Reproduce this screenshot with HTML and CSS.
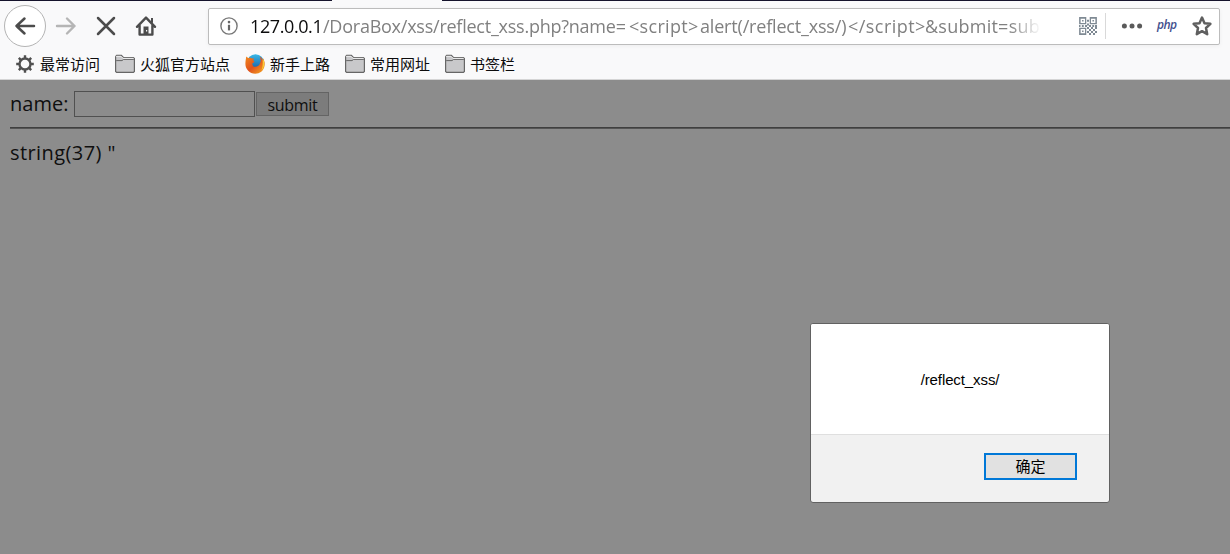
FILE: index.html
```html
<!DOCTYPE html>
<html lang="zh-CN">
<head>
<meta charset="utf-8">
<title>reflect_xss</title>
<link rel="stylesheet" href="styles.css">
</head>
<body>
<svg width="0" height="0" class="defs">
  <symbol id="folder" viewBox="0 0 20 20">
    <path d="M.6 17.4V2.6L1.6 1.4H6.4L8.4 3.5H18.4L19.4 4.5V17.4L18.4 18.4H1.6Z" fill="#c8c8ca" stroke="#666" stroke-width="1.2"/>
    <path d="M1.2 6.6H7L8.6 5.4H18.8" fill="none" stroke="#666"/>
    <path d="M1.4 3V2.3H6L8 4.4H18.6" fill="none" stroke="#eee"/>
  </symbol>
  <symbol id="finder" viewBox="0 0 7 7">
    <path d="M.8.8H6.2V6.2H.8Z" fill="none" stroke="#7f8a94" stroke-width="1.4"/>
    <path d="M2.8 2.8H4.2V4.2H2.8Z" fill="#7f8a94"/>
  </symbol>
</svg>
<div class="tabs"><span class="tab-active"></span></div>
<nav class="toolbar">
  <span class="back"><svg width="22" height="20" viewBox="0 0 22 20"><path d="M20 10H2.5M10.5 2.5L2.5 10L10.5 17.5" fill="none" stroke="#4c4c4c" stroke-width="2.5" stroke-linecap="round" stroke-linejoin="round"/></svg></span>
  <svg class="forward" width="22" height="20" viewBox="0 0 22 20"><path d="M2 10H19.5M12 2.5L19.5 10L12 17.5" fill="none" stroke="#b5b5b5" stroke-width="2.4" stroke-linecap="round" stroke-linejoin="round"/></svg>
  <svg class="stop" width="20" height="20" viewBox="0 0 20 20"><path d="M2 2L18 18M18 2L2 18" fill="none" stroke="#4c4c4c" stroke-width="2.5" stroke-linecap="round"/></svg>
  <svg class="home" width="22" height="22" viewBox="0 0 22 22"><path d="M2 11.8L11 2.6L20 11.8M4.6 10.5V19.6H17.4V10.5" fill="none" stroke="#4c4c4c" stroke-width="2.4" stroke-linecap="round" stroke-linejoin="round"/><path d="M8.5 11.5H13.5V19H8.5Z" fill="#4c4c4c"/><path d="M11 15H12.2V16.6H11Z" fill="#f9f9fa"/><path d="M16 3H18V8.5L16 6.5Z" fill="#4c4c4c"/></svg>
  <div class="urlbar">
    <svg class="info" width="18" height="18" viewBox="0 0 18 18"><circle cx="9" cy="9" r="8.1" fill="none" stroke="#777" stroke-width="1.4"/><circle cx="9" cy="5.1" r="1.3" fill="#666"/><path d="M7.9 7.8H10.1V13.4H7.9Z" fill="#666"/></svg>
    <div class="url"><span class="host">127.0.0.1</span><span class="path">/DoraBox/xss/reflect_xss.php?name=</span><span class="tag">&lt;script&gt;</span><span class="call">alert(/reflect_xss/)</span><span class="endtag">&lt;/script&gt;</span><span class="query">&amp;submit=sub</span></div>
    <svg class="qr" width="18" height="18" viewBox="0 0 18 18"><use href="#finder" x="0" y="0" width="7.6" height="7.6"/><use href="#finder" x="10.4" y="0" width="7.6" height="7.6"/><use href="#finder" x="0" y="10.4" width="7.6" height="7.6"/><path d="M8 3.8H10M3.8 8V10M14.2 8V10M8 7.5H10M6 9H8M10 9H12M16 9H18M0 9H1.5M8 11H10M12 11H14M16 11H18M10 13H12M14 13H16M8 15H10M12 15H14M16 15H18M10 17H12M14 17H16" stroke="#7f8a94" stroke-width="1.9"/></svg>
    <span class="divider"></span>
    <svg class="dots" width="22" height="6" viewBox="0 0 22 6"><circle cx="3.4" cy="3" r="2.5"/><circle cx="11" cy="3" r="2.5"/><circle cx="18.6" cy="3" r="2.5"/></svg>
    <span class="php">php</span>
    <svg class="star" width="22" height="22" viewBox="0 0 22 22"><path d="M11 2.6L13.5 8.2L19.4 8.8L15 13L16.2 19.2L11 16.2L5.8 19.2L7 13L2.6 8.8L8.5 8.2Z" fill="none" stroke="#5f5f5f" stroke-width="2.5" stroke-linejoin="round"/></svg>
  </div>
</nav>
<div class="bookmarks">
  <span class="bm w1"><svg width="20" height="20" viewBox="0 0 20 20"><path d="M10 1.2V4M10 16V18.8M1.2 10H4M16 10H18.8M3.8 3.8L5.8 5.8M14.2 14.2L16.2 16.2M16.2 3.8L14.2 5.8M5.8 14.2L3.8 16.2" stroke="#505050" stroke-width="2.4"/><circle cx="10" cy="10" r="5.5" fill="none" stroke="#505050" stroke-width="2.4"/></svg>最常访问</span>
  <span class="bm w2"><svg width="20" height="20"><use href="#folder"/></svg>火狐官方站点</span>
  <span class="bm w3"><svg width="20" height="20" viewBox="0 0 20 20"><defs><linearGradient id="fox" x1="0" y1="0" x2="1" y2="1"><stop offset="0" stop-color="#f28a1c"/><stop offset=".5" stop-color="#e0521e"/><stop offset="1" stop-color="#f7ac21"/></linearGradient><linearGradient id="globe" x1="0" y1="0" x2="0" y2="1"><stop offset="0" stop-color="#38b9e8"/><stop offset="1" stop-color="#14539c"/></linearGradient></defs><circle cx="10.5" cy="8.8" r="8.6" fill="url(#globe)"/><path d="M1.2 2.5L3.5 4.2C5 3.3 6.2 3.8 7 4.4L9 4.5L8.4 6.5L9.6 8L7.4 9.2C7 11 8.2 12.9 10.3 12.8C12.8 12.7 14.4 11.3 15 9.3C16.2 7 15.8 4.5 14.6 2.2C16.6 3.6 17.2 5 17.6 6.5L17.9 4.2C19.5 6.5 20 9 19.5 12C18.5 17 14.8 19.7 10.3 19.7C4.5 19.7.5 15.2.4 10C.4 7 1 5 1.2 2.5Z" fill="url(#fox)"/><path d="M17.9 4.2C20 8 20 13 16.5 16.5C17.6 13 18 10 17.6 6.5Z" fill="#fbcb35"/></svg>新手上路</span>
  <span class="bm w4"><svg width="20" height="20"><use href="#folder"/></svg>常用网址</span>
  <span class="bm"><svg width="20" height="20"><use href="#folder"/></svg>书签栏</span>
</div>
<main class="page">
  <div class="form"><label class="label">name:</label><span class="field"></span><span class="submit">submit</span></div>
  <div class="rule"></div>
  <p class="dump">string(37) "</p>
  <section class="dialog">
    <div class="message">/reflect_xss/</div>
    <footer class="actions"><span class="ok">确定</span></footer>
  </section>
</main>
</body>
</html>
```
FILE: styles.css
```css
* { box-sizing: border-box; }
body { margin: 0; width: 1230px; height: 554px; overflow: hidden; background: #f9f9fa; display: flex; flex-direction: column; font-family: "Open Sans", "Noto Sans CJK SC", sans-serif; }
svg { flex: none; display: block; }
.defs { position: absolute; }
.tabs { height: 1px; background: #15132c; padding-left: 332px; flex: none; }
.tab-active { display: block; width: 110px; height: 1px; background: #f9f9fa; }
.toolbar { height: 50px; flex: none; display: flex; align-items: center; padding: 0 10px 0 4px; }
.back { width: 42px; height: 42px; border: 1px solid #b4b4b4; border-radius: 50%; background: #fff; display: flex; align-items: center; justify-content: center; }
.forward { margin-left: 9px; }
.stop { margin-left: 19px; }
.home { margin-left: 19px; }
.urlbar { margin-left: 51px; width: 1012px; height: 37px; border: 1px solid #bcbcbc; border-radius: 2px; background: #fff; box-shadow: 0 1px 4px rgba(0,0,0,.05); display: flex; align-items: center; padding: 0 0 1px 11px; margin-top: 1px; }
.url { margin-left: 12px; width: 791px; overflow: hidden; display: flex; white-space: nowrap; font-size: 18px; line-height: 32px; color: #808080; -webkit-mask-image: linear-gradient(90deg, #000 96%, transparent 100%); mask-image: linear-gradient(90deg, #000 96%, transparent 100%); }
.url span { flex: none; }
.host { width: 73px; color: #0c0c0d; letter-spacing: -.4px; }
.path { width: 306px; letter-spacing: -.24px; }
.tag { width: 71px; letter-spacing: .3px; }
.call { width: 148px; letter-spacing: -.18px; }
.endtag { width: 77px; letter-spacing: .45px; }
.query { letter-spacing: .25px; }
.qr { margin-left: 38px; }
.divider { margin-left: 8px; width: 1px; height: 26px; background: #d9d9d9; }
.dots { margin-left: 15px; fill: #5a5a5a; }
.php { margin-left: 14px; width: 20px; font: italic 600 12px/20px "Open Sans", sans-serif; letter-spacing: -.5px; color: #44508e; padding-bottom: 2px; }
.star { margin-left: 14px; }
.bookmarks { height: 29px; flex: none; display: flex; align-items: center; padding: 0 0 2px 15px; border-bottom: 1px solid #d5d5d5; }
.bm { display: flex; align-items: center; gap: 5px; font: 15px/20px "Noto Sans CJK SC", sans-serif; color: #0c0c0d; white-space: nowrap; }
.w1, .w3, .w4 { width: 100px; }
.w2 { width: 130px; }
.page { flex: 1; background: #8c8c8c; position: relative; padding: 11px 0 0 10px; color: #0f0f0f; font-size: 20px; }
.form { height: 26px; display: flex; align-items: center; }
.label { width: 64px; line-height: 26px; }
.field { width: 181px; height: 26px; border: 1px solid #505050; background: #8c8c8c; }
.submit { margin-left: 1px; width: 73px; height: 24px; border: 1px solid #646464; background: #7c7c7c; font-size: 16px; line-height: 24px; letter-spacing: -.3px; text-align: center; }
.rule { margin-top: 10px; height: 2px; background: #3f3f3f; border-bottom: 1px solid #555; }
.dump { margin: 10px 0 0; line-height: 28px; letter-spacing: .42px; }
.dialog { position: absolute; left: 810px; top: 243px; width: 300px; height: 180px; border: 1px solid #616161; border-radius: 3px; background: #f1f1f1; overflow: hidden; color: #000; }
.message { height: 111px; background: #fff; border-bottom: 1px solid #dfdfdf; font: 15px/112px "Liberation Sans", sans-serif; letter-spacing: -.1px; text-align: center; }
.actions { display: flex; justify-content: flex-end; padding: 18px 32px 0 0; }
.ok { width: 93px; height: 27px; border: 2px solid #0078d7; background: #e1e1e1; font: 15px/21px "Noto Sans CJK SC", sans-serif; text-align: center; }
```
